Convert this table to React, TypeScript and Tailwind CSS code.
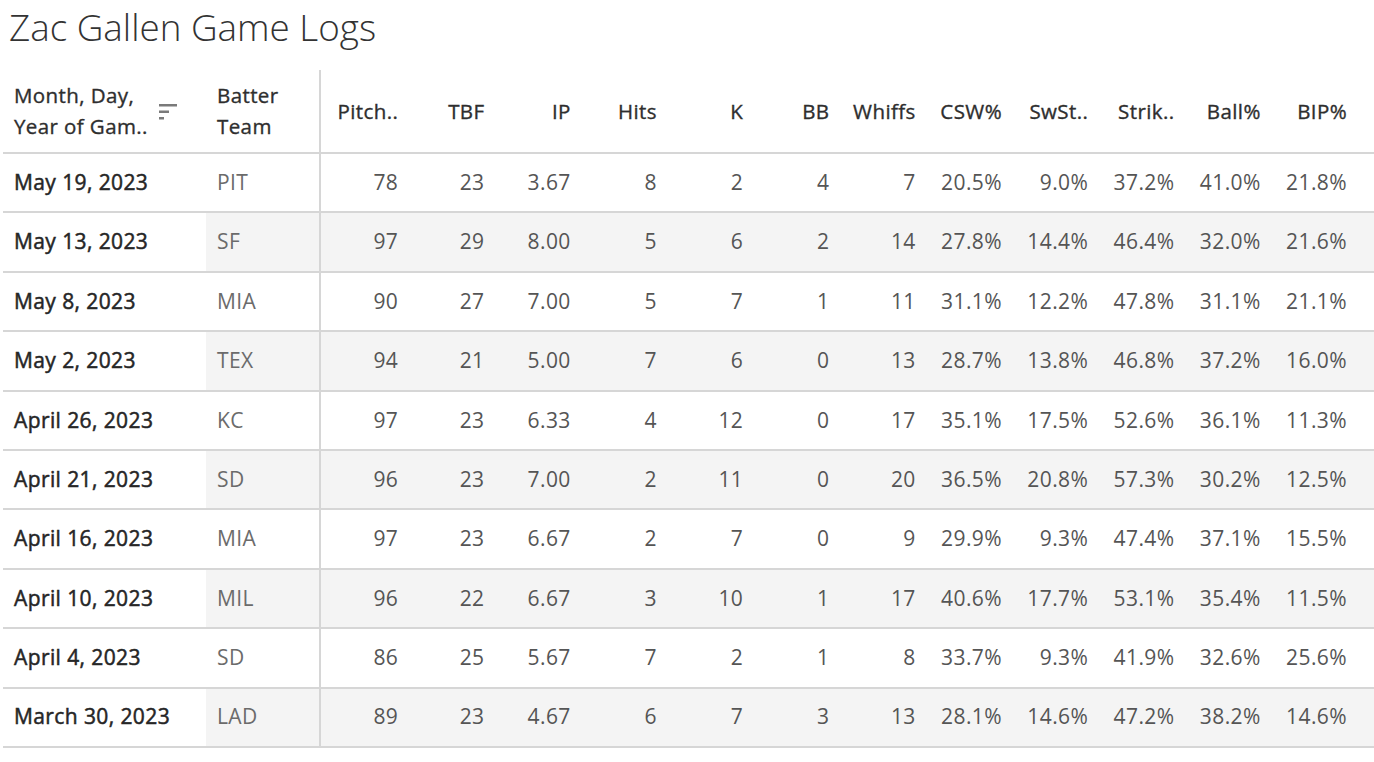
const rows: [string, string, string[]][] = [
  ["May 19, 2023", "PIT", ["78", "23", "3.67", "8", "2", "4", "7", "20.5%", "9.0%", "37.2%", "41.0%", "21.8%"]],
  ["May 13, 2023", "SF", ["97", "29", "8.00", "5", "6", "2", "14", "27.8%", "14.4%", "46.4%", "32.0%", "21.6%"]],
  ["May 8, 2023", "MIA", ["90", "27", "7.00", "5", "7", "1", "11", "31.1%", "12.2%", "47.8%", "31.1%", "21.1%"]],
  ["May 2, 2023", "TEX", ["94", "21", "5.00", "7", "6", "0", "13", "28.7%", "13.8%", "46.8%", "37.2%", "16.0%"]],
  ["April 26, 2023", "KC", ["97", "23", "6.33", "4", "12", "0", "17", "35.1%", "17.5%", "52.6%", "36.1%", "11.3%"]],
  ["April 21, 2023", "SD", ["96", "23", "7.00", "2", "11", "0", "20", "36.5%", "20.8%", "57.3%", "30.2%", "12.5%"]],
  ["April 16, 2023", "MIA", ["97", "23", "6.67", "2", "7", "0", "9", "29.9%", "9.3%", "47.4%", "37.1%", "15.5%"]],
  ["April 10, 2023", "MIL", ["96", "22", "6.67", "3", "10", "1", "17", "40.6%", "17.7%", "53.1%", "35.4%", "11.5%"]],
  ["April 4, 2023", "SD", ["86", "25", "5.67", "7", "2", "1", "8", "33.7%", "9.3%", "41.9%", "32.6%", "25.6%"]],
  ["March 30, 2023", "LAD", ["89", "23", "4.67", "6", "7", "3", "13", "28.1%", "14.6%", "47.2%", "38.2%", "14.6%"]],
];

const cols = ["Pitch..", "TBF", "IP", "Hits", "K", "BB", "Whiffs", "CSW%", "SwSt..", "Strik..", "Ball%", "BIP%"];

function SortIcon() {
  return (
    <svg width="20" height="18" viewBox="0 0 20 18" className="shrink-0">
      <rect x="1" y="2" width="18" height="2.5" fill="#7a7a7a" />
      <rect x="1" y="8.5" width="10" height="2.5" fill="#7a7a7a" />
      <rect x="1" y="15" width="5" height="2.5" fill="#7a7a7a" />
    </svg>
  );
}

export default function App() {
  return (
    <div
      className="min-h-screen bg-white text-[#333]"
      style={{ fontFamily: '"Open Sans", "Liberation Sans", sans-serif' }}
    >
      <h1 className="h-[70px] pl-[9px] pt-[2px] text-[36.8px] font-light leading-[50px] text-[#333]">
        Zac Gallen Game Logs
      </h1>

      <div className="pl-[3px] tracking-[0.4px]">
        {/* header */}
        <div className="flex h-[84px] border-b-2 border-[#d6d6d6] text-[#2e2e2e] [-webkit-text-stroke:0.35px_#2e2e2e]">
          <div className="flex w-[203px] items-center justify-between pl-[11px] pr-[28px] text-[20.5px] leading-[31px]">
            <div className="whitespace-nowrap">
              Month, Day,
              <br />
              Year of Gam..
            </div>
            <SortIcon />
          </div>
          <div className="flex w-[115px] items-center border-r-2 border-[#d6d6d6] pl-[11px] text-[20.5px] leading-[31px]">
            <div>
              Batter
              <br />
              Team
            </div>
          </div>
          {cols.map((c) => (
            <div
              key={c}
              className="flex w-[86.25px] items-center justify-end pr-[9px] text-[20.5px]"
            >
              {c}
            </div>
          ))}
        </div>

        {rows.map(([date, team, vals], i) => (
          <div key={date} className="flex h-[59.4px] border-b-2 border-[#d6d6d6]">
            <div className="flex w-[203px] items-center pl-[11px] text-[21px] text-[#262626] [-webkit-text-stroke:0.5px_#262626]">
              {date}
            </div>
            <div
              className={`flex flex-1 ${i % 2 === 1 ? "bg-[#f4f4f4]" : "bg-white"}`}
            >
              <div className="flex w-[115px] items-center border-r-2 border-[#d6d6d6] pl-[11px] text-[21px] text-[#6b6b6b]">
                {team}
              </div>
              {vals.map((v, j) => (
                <div
                  key={j}
                  className="flex w-[86.25px] items-center justify-end pr-[9px] text-[21px] text-[#555]"
                >
                  {v}
                </div>
              ))}
            </div>
          </div>
        ))}
      </div>
    </div>
  );
}
